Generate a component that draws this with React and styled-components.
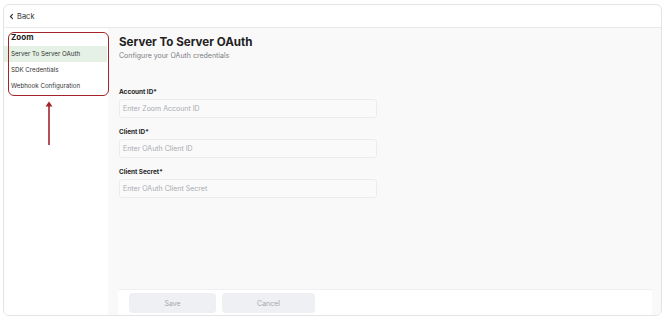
import React from "react";
import styled, { createGlobalStyle } from "styled-components";

const GlobalStyle = createGlobalStyle`
  body {
    margin: 0;
    background: #ffffff;
    font-family: Inter, "Noto Sans", sans-serif;
    color: #1f2328;
  }
`;

export default function App() {
  const items = ["Server To Server OAuth", "SDK Credentials", "Webhook Configuration"];
  const fields = [
    { label: "Account ID*", placeholder: "Enter Zoom Account ID" },
    { label: "Client ID*", placeholder: "Enter OAuth Client ID" },
    { label: "Client Secret*", placeholder: "Enter OAuth Client Secret" },
  ];

  return (
    <>
      <GlobalStyle />
      <Frame>
        <Header>
          <BackButton>
            <svg width="7" height="7" viewBox="0 0 10 10">
              <path d="M6.5 2 L3.5 5 L6.5 8" fill="none" stroke="#333" strokeWidth="1.6" strokeLinecap="round" strokeLinejoin="round" />
            </svg>
            Back
          </BackButton>
        </Header>
        <Body>
          <Sidebar>
            <NavGroup>
              <NavHeading>Zoom</NavHeading>
              {items.map((item, i) => (
                <NavItem key={item} $active={i === 0}>
                  {item}
                </NavItem>
              ))}
            </NavGroup>
            <Arrow>
              <svg width="10" height="46" viewBox="0 0 10 46">
                <path d="M5 45 L5 3" stroke="#a4242c" strokeWidth="1.6" />
                <path d="M1.5 6.5 L5 1.5 L8.5 6.5 Z" fill="#a4242c" />
              </svg>
            </Arrow>
          </Sidebar>
          <Main>
            <Title>Server To Server OAuth</Title>
            <Subtitle>Configure your OAuth credentials</Subtitle>
            <Form>
              {fields.map((f) => (
                <Field key={f.label}>
                  <Label>{f.label}</Label>
                  <Input placeholder={f.placeholder} />
                </Field>
              ))}
            </Form>
            <Footer>
              <Button $width={87}>Save</Button>
              <Button $width={93}>Cancel</Button>
            </Footer>
          </Main>
        </Body>
      </Frame>
    </>
  );
}

const Frame = styled.div`
  box-sizing: border-box;
  margin: 4px 0 0 3px;
  width: 659px;
  height: 312px;
  border: 1px solid #e2e4e8;
  border-radius: 6px;
  display: flex;
  flex-direction: column;
  overflow: hidden;
  background: #fff;
`;

const Header = styled.div`
  height: 22px;
  border-bottom: 1px solid #e8eaee;
  display: flex;
  align-items: center;
  padding-left: 4px;
`;

const BackButton = styled.div`
  display: flex;
  align-items: center;
  gap: 2px;
  font-size: 7.5px;
  color: #333;
`;

const Body = styled.div`
  flex: 1;
  display: flex;
  min-height: 0;
`;

const Sidebar = styled.div`
  width: 104px;
  background: #fff;
  padding-top: 3px;
  display: flex;
  flex-direction: column;
`;

const NavGroup = styled.div`
  position: relative;
  padding-bottom: 2px;

  &::after {
    content: "";
    position: absolute;
    top: 1px;
    left: 4px;
    right: -1px;
    bottom: 0;
    border: 1.5px solid #a4242c;
    border-radius: 6px;
    pointer-events: none;
  }
`;

const NavHeading = styled.div`
  height: 15px;
  line-height: 13px;
  padding-left: 7px;
  font-size: 8px;
  font-weight: 700;
  color: #222;
`;

const NavItem = styled.div`
  height: 16px;
  line-height: 16px;
  padding-left: 7px;
  margin-right: 1px;
  font-size: 6.2px;
  color: #333;
  background: ${(p) => (p.$active ? "#e4f1e4" : "transparent")};
`;

const Arrow = styled.div`
  display: flex;
  justify-content: flex-start;
  padding: 4px 0 0 40px;
`;

const Main = styled.div`
  flex: 1;
  background: #f9f9fa;
  padding: 7px 9px 0 11px;
  display: flex;
  flex-direction: column;
`;

const Title = styled.div`
  font-size: 11.6px;
  line-height: 14px;
  font-weight: 700;
  color: #222;
`;

const Subtitle = styled.div`
  margin-top: 2px;
  font-size: 7px;
  line-height: 10px;
  color: #7a7d82;
`;

const Form = styled.div`
  margin-top: 27px;
  display: flex;
  flex-direction: column;
  gap: 10px;
`;

const Field = styled.div`
  display: flex;
  flex-direction: column;
  gap: 2px;
`;

const Label = styled.div`
  font-size: 6.4px;
  line-height: 9px;
  font-weight: 700;
  color: #222;
`;

const Input = styled.input`
  box-sizing: border-box;
  width: 258px;
  height: 19px;
  border: 1px solid #ececef;
  border-radius: 3px;
  background: #fafafa;
  padding: 0 3px;
  font-family: Inter, "Noto Sans", sans-serif;
  font-size: 7px;
  outline: none;

  &::placeholder {
    color: #a8abb0;
  }
`;

const Footer = styled.div`
  margin-top: auto;
  margin-left: -1px;
  height: 26px;
  box-sizing: border-box;
  background: #fff;
  border-top: 1px solid #f0f0f2;
  border-radius: 3px 3px 0 0;
  display: flex;
  align-items: flex-start;
  gap: 6px;
  padding: 3px 0 0 11px;
`;

const Button = styled.button`
  width: ${(p) => p.$width}px;
  height: 20px;
  border: none;
  border-radius: 4px;
  background: #eef0f4;
  color: #a5a8ad;
  font-family: Inter, "Noto Sans", sans-serif;
  font-size: 7px;
`;
